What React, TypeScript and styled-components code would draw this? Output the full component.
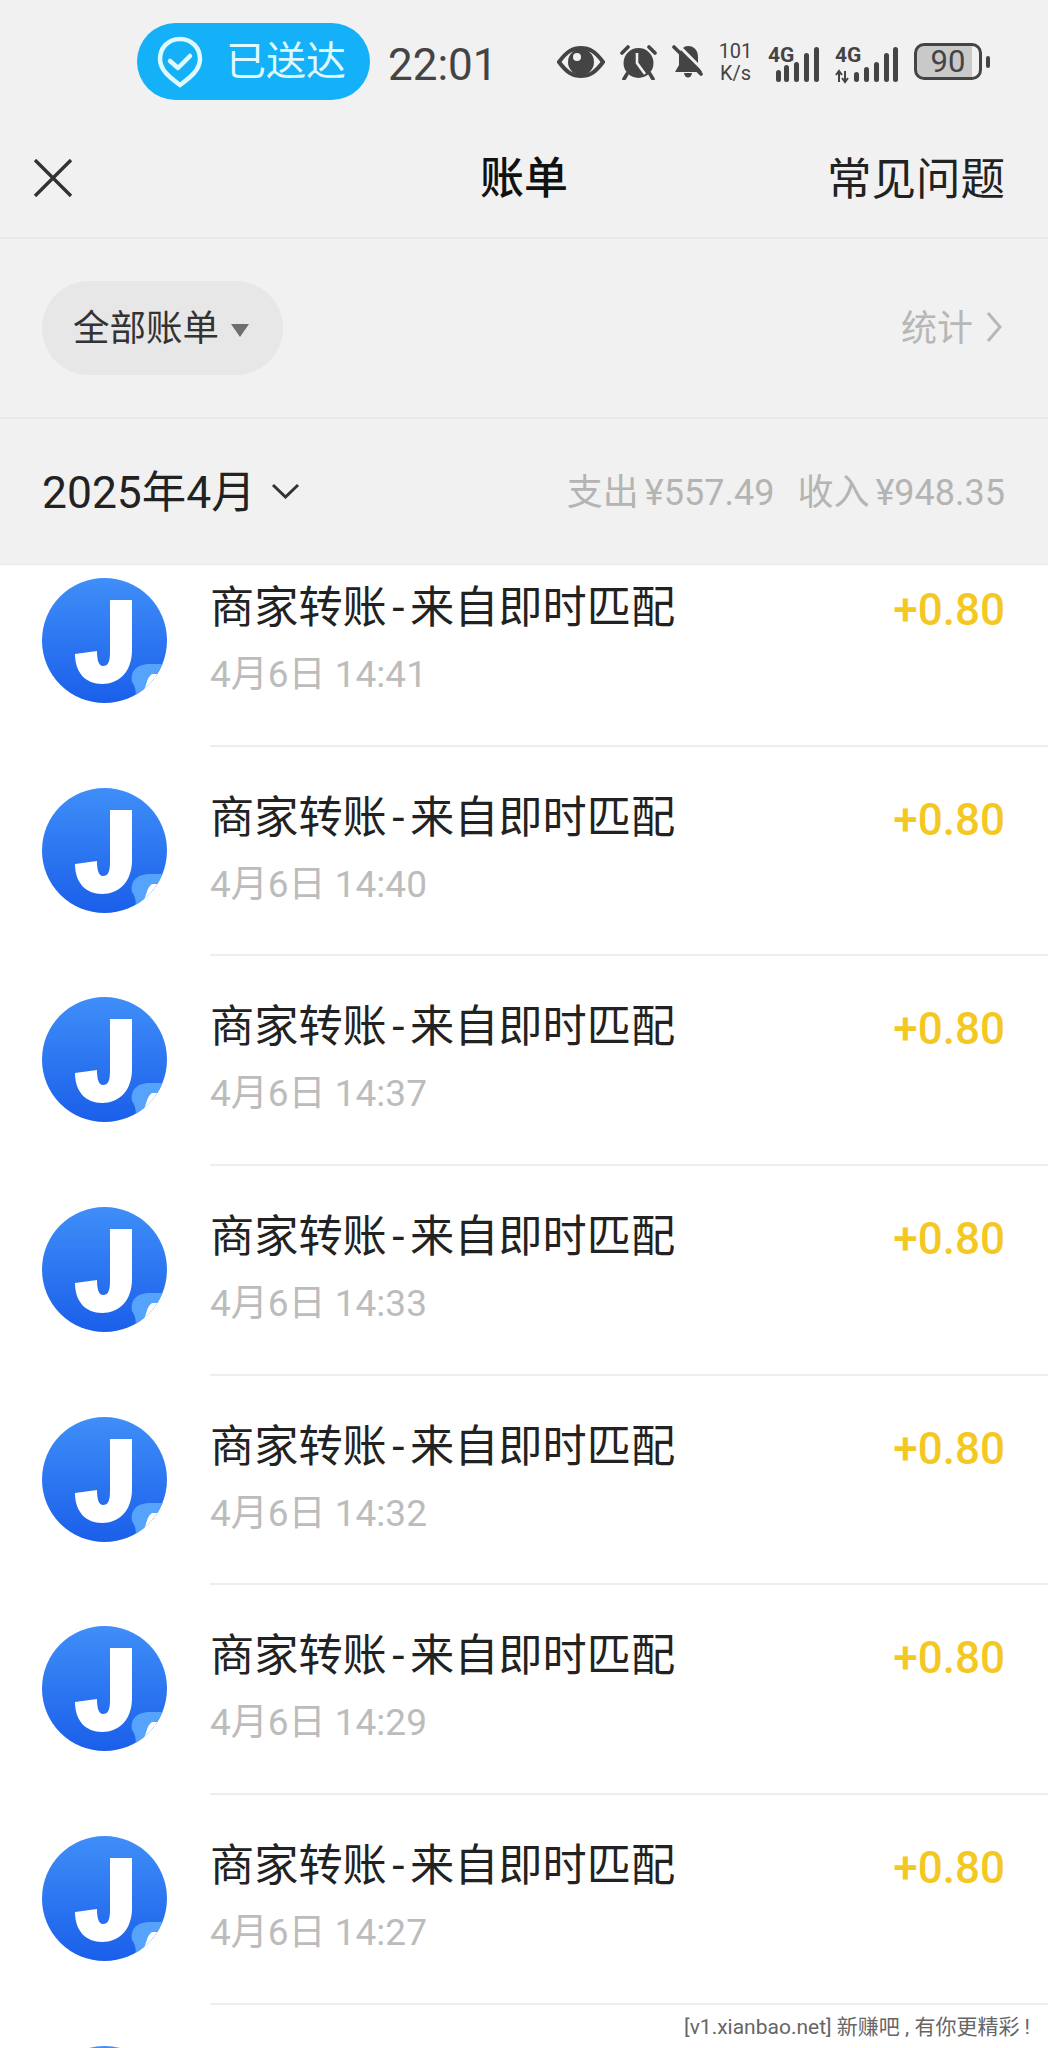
import { createGlobalStyle, styled } from "styled-components";

const CJK = `Roboto, "Noto Sans CJK SC", sans-serif`;

const GlobalStyle = createGlobalStyle`
  html, body {
    margin: 0;
    padding: 0;
    background: #fff;
    font-family: ${CJK};
  }
`;

const Page = styled.div`
  position: relative;
  width: 1048px;
  height: 2048px;
  overflow: hidden;
  display: flex;
  flex-direction: column;
  background: #fff;
`;

const Top = styled.div`
  flex: none;
  background: #f1f1f1;
`;

const StatusBar = styled.div`
  height: 122px;
  box-sizing: border-box;
  padding: 23px 58px 0 137px;
  display: flex;
  align-items: flex-start;
  color: #444;
`;

const SentPill = styled.div`
  width: 233px;
  height: 77px;
  box-sizing: border-box;
  padding-left: 20px;
  border-radius: 39px;
  background: #14b0f8;
  color: #defaff;
  display: flex;
  align-items: center;
  gap: 23px;
  font-size: 40px;
  line-height: 79px;
  svg {
    flex: none;
  }
`;

const Clock = styled.div`
  margin-left: 18px;
  font-size: 44px;
  line-height: 84px;
`;

const StatusIcons = styled.div`
  margin-left: auto;
  height: 77px;
  display: flex;
  align-items: center;
  gap: 15px;
`;

const Speed = styled.div`
  width: 35px;
  font-size: 20px;
  line-height: 22px;
  text-align: center;
  white-space: nowrap;
`;

const Battery = styled.div`
  display: flex;
  align-items: center;
  gap: 4px;
`;

const BatteryBody = styled.div`
  width: 68px;
  height: 37px;
  box-sizing: border-box;
  border: 3px solid #444;
  border-radius: 10px;
  overflow: hidden;
  background: linear-gradient(to right, #c9c9c9 88%, #f1f1f1 88%);
  font-size: 31px;
  line-height: 31px;
  text-align: center;
`;

const BatteryCap = styled.div`
  width: 4px;
  height: 12px;
  border-radius: 2px;
  background: #444;
`;

const NavBar = styled.div`
  height: 117px;
  box-sizing: border-box;
  padding: 0 43px 4px 33px;
  border-bottom: 2px solid #e9e9e9;
  display: flex;
  align-items: center;
  justify-content: space-between;
  position: relative;
`;

const NavTitle = styled.div`
  position: absolute;
  left: 0;
  right: 0;
  margin-bottom: 5px;
  text-align: center;
  font-size: 44px;
  font-weight: 500;
  color: #111;
  pointer-events: none;
`;

const NavAction = styled.div`
  margin-bottom: 5px;
  font-size: 44.5px;
  color: #222;
`;

const FilterRow = styled.div`
  height: 180px;
  box-sizing: border-box;
  padding: 0 45px 0 42px;
  border-bottom: 2px solid #e9e9e9;
  display: flex;
  align-items: center;
  justify-content: space-between;
`;

const FilterChip = styled.div`
  width: 241px;
  height: 94px;
  box-sizing: border-box;
  padding: 0 0 5px 31px;
  border-radius: 47px;
  background: #e7e7e7;
  display: flex;
  align-items: center;
  gap: 12px;
  font-size: 36.5px;
  color: #333;
`;

const ChipCaret = styled.span`
  width: 0;
  height: 0;
  margin-top: 9px;
  border-left: 9px solid transparent;
  border-right: 9px solid transparent;
  border-top: 13px solid #6e6e6e;
`;

const StatsLink = styled.div`
  display: flex;
  align-items: center;
  gap: 12px;
  padding-bottom: 6px;
  font-size: 36px;
  color: #b7b7b7;
  svg {
    margin-top: 4px;
  }
`;

const MonthRow = styled.div`
  height: 146px;
  box-sizing: border-box;
  padding: 0 43px 6px 42px;
  border-bottom: 1px solid #e9e9e9;
  display: flex;
  align-items: center;
  justify-content: space-between;
`;

const MonthLabel = styled.div`
  display: flex;
  align-items: center;
  gap: 15px;
  font-size: 44.4px;
  color: #222;
  svg {
    margin-top: 4px;
  }
`;

const Totals = styled.div`
  display: flex;
  gap: 23px;
  font-size: 36px;
  color: #b4b4b4;
  white-space: nowrap;
  span + span {
    margin-left: 6px;
  }
`;

const List = styled.div`
  flex: 1;
  min-height: 0;
  overflow: hidden;
`;

const ScrolledRows = styled.div`
  margin-top: -28px;
`;

const Row = styled.div`
  height: 209.7px;
  box-sizing: border-box;
  padding-left: 42px;
  display: flex;
  align-items: flex-start;
`;

const Avatar = styled.div`
  flex: none;
  width: 125px;
  height: 125px;
  margin-top: 41px;
  border-radius: 50%;
  overflow: hidden;
  background: linear-gradient(to bottom, #3f8ef8, #1a5fea);
  svg {
    display: block;
  }
`;

const RowBody = styled.div`
  flex: 1;
  height: 100%;
  box-sizing: border-box;
  margin-left: 43px;
  padding: 41px 43px 0 0;
  border-bottom: 2px solid #eeeeee;
`;

const RowTop = styled.div`
  display: flex;
  justify-content: space-between;
`;

const RowTitle = styled.div`
  font-size: 44.2px;
  line-height: 60px;
  color: #222;
  white-space: nowrap;
`;

const TitleDash = styled.span`
  padding: 0 5.5px;
`;

const Amount = styled.div`
  font-size: 44px;
  line-height: 64px;
  font-weight: 500;
  color: #f4c823;
`;

const RowDate = styled.div`
  margin-top: 8px;
  font-size: 37px;
  line-height: 50px;
  color: #bcbcbc;
  white-space: nowrap;
`;

const Watermark = styled.div`
  position: absolute;
  right: 0;
  bottom: 0;
  height: 38px;
  padding: 0 18px 0 4px;
  background: #fff;
  font-size: 21px;
  line-height: 34px;
  color: #666;
  white-space: nowrap;
`;

const dates = [
  "14:41",
  "14:40",
  "14:37",
  "14:33",
  "14:32",
  "14:29",
  "14:27",
];

const SentIcon = () => (
  <svg width="46" height="52" viewBox="0 0 46 52" fill="none" stroke="#defaff" strokeWidth="4.5">
    <path d="M23 3C11 3 3 12 3 23C3 35 15 43 23 49C31 43 43 35 43 23C43 12 35 3 23 3Z" />
    <path d="M13 25L21 32L33 20" strokeLinecap="round" strokeLinejoin="round" />
  </svg>
);

const EyeIcon = () => (
  <svg width="48" height="32" viewBox="0 0 48 32">
    <path d="M2 16C10 5 16 2 24 2C32 2 38 5 46 16C38 27 32 30 24 30C16 30 10 27 2 16Z" fill="none" stroke="#444" strokeWidth="4" />
    <circle cx="24" cy="16" r="13" fill="#444" />
    <circle cx="20" cy="11" r="4" fill="#f1f1f1" />
  </svg>
);

const AlarmIcon = () => (
  <svg width="37" height="36" viewBox="0 0 37 36">
    <circle cx="18.5" cy="19" r="15" fill="#444" />
    <path d="M17 9V19L25 30" fill="none" stroke="#f1f1f1" strokeWidth="2.6" />
    <path d="M2 9L8 3M35 9L29 3M7 30L4 35M30 30L33 35" stroke="#444" strokeWidth="3.6" strokeLinecap="round" />
  </svg>
);

const BellOffIcon = () => (
  <svg width="31" height="34" viewBox="0 0 31 34">
    <path d="M16 1C22 1 26 5 26 12V20L30 27H3L7 20V9C9 4 12 1 16 1Z" fill="#444" />
    <path d="M12 28H20C19.5 31 18 32.5 16 32.5C14 32.5 12.5 31 12 28Z" fill="#444" />
    <path d="M5 -1L33 27" stroke="#f1f1f1" strokeWidth="3" />
    <path d="M2 2L29 29" stroke="#444" strokeWidth="3.6" strokeLinecap="round" />
  </svg>
);

const SignalIcon = ({ dual }: { dual?: boolean }) => {
  const width = dual ? 64 : 52;
  const bars = dual
    ? [
        [19, 26, 10],
        [29, 21, 15],
        [39, 16, 20],
        [49, 7, 29],
        [58, 1, 35],
      ]
    : [
        [8, 24, 12],
        [16, 19, 17],
        [26, 16, 20],
        [36, 7, 29],
        [46, 1, 35],
      ];
  return (
    <svg width={width} height="44" viewBox={`0 -6 ${width} 44`} fill="#444">
      <text x="0" y="16" fontSize="21" fontWeight="700" fontFamily="Roboto, sans-serif">
        4G
      </text>
      {bars.map(([x, y, h]) => (
        <rect key={x} x={x} y={y} width="5" height={h} rx="2.5" />
      ))}
      {dual && <path d="M4 36V26M1 29L4 25L7 29M10 25V35M7 32L10 36L13 32" fill="none" stroke="#444" strokeWidth="2" />}
    </svg>
  );
};

const CloseIcon = () => (
  <svg width="40" height="38" viewBox="0 0 40 38" fill="none" stroke="#333" strokeWidth="3.4">
    <path d="M2 1L38 37M38 1L2 37" />
  </svg>
);

const ChevronRight = () => (
  <svg width="18" height="32" viewBox="0 0 18 32" fill="none" stroke="#b7b7b7" strokeWidth="3">
    <path d="M3 2L15 16L3 30" />
  </svg>
);

const ChevronDown = () => (
  <svg width="29" height="16" viewBox="0 0 29 16" fill="none" stroke="#333" strokeWidth="3">
    <path d="M2 2L14.5 14L27 2" />
  </svg>
);

// App logo: white J on the blue disc, with the pale corner tab clipped by the disc
const LogoMark = () => (
  <svg width="125" height="125" viewBox="0 0 125 125">
    <path
      d="M68 22H90V72C90 94 77 106 60 106C44 106 33 95 33 76L55 73C55 83 57 88 61 88C66 88 68 84 68 74Z"
      fill="#fff"
    />
    <path d="M90 104C88 92 96 86 108 86H125V125H90C96 118 94 110 90 104Z" fill="#55a3fb" />
    <path d="M101 113C105 108 104 100 110 96H116L115 108L104 118Z" fill="#fff" />
  </svg>
);

const BillRow = ({ time }: { time: string }) => (
  <Row>
    <Avatar>
      <LogoMark />
    </Avatar>
    <RowBody>
      <RowTop>
        <RowTitle>
          商家转账<TitleDash>-</TitleDash>来自即时匹配
        </RowTitle>
        <Amount>+0.80</Amount>
      </RowTop>
      <RowDate>4月6日 {time}</RowDate>
    </RowBody>
  </Row>
);

export default function App() {
  return (
    <Page>
      <GlobalStyle />
      <Top>
        <StatusBar>
          <SentPill>
            <SentIcon />
            已送达
          </SentPill>
          <Clock>22:01</Clock>
          <StatusIcons>
            <EyeIcon />
            <AlarmIcon />
            <BellOffIcon />
            <Speed>
              101
              <br />
              K/s
            </Speed>
            <SignalIcon />
            <SignalIcon dual />
            <Battery>
              <BatteryBody>90</BatteryBody>
              <BatteryCap />
            </Battery>
          </StatusIcons>
        </StatusBar>
        <NavBar>
          <CloseIcon />
          <NavTitle>账单</NavTitle>
          <NavAction>常见问题</NavAction>
        </NavBar>
        <FilterRow>
          <FilterChip>
            全部账单
            <ChipCaret />
          </FilterChip>
          <StatsLink>
            统计
            <ChevronRight />
          </StatsLink>
        </FilterRow>
        <MonthRow>
          <MonthLabel>
            2025年4月
            <ChevronDown />
          </MonthLabel>
          <Totals>
            <div>
              <span>支出</span>
              <span>¥557.49</span>
            </div>
            <div>
              <span>收入</span>
              <span>¥948.35</span>
            </div>
          </Totals>
        </MonthRow>
      </Top>
      <List>
        <ScrolledRows>
          {dates.map((time) => (
            <BillRow key={time} time={time} />
          ))}
          <Row>
            <Avatar>
              <LogoMark />
            </Avatar>
          </Row>
        </ScrolledRows>
      </List>
      <Watermark>[v1.xianbao.net] 新赚吧 , 有你更精彩 !</Watermark>
    </Page>
  );
}
